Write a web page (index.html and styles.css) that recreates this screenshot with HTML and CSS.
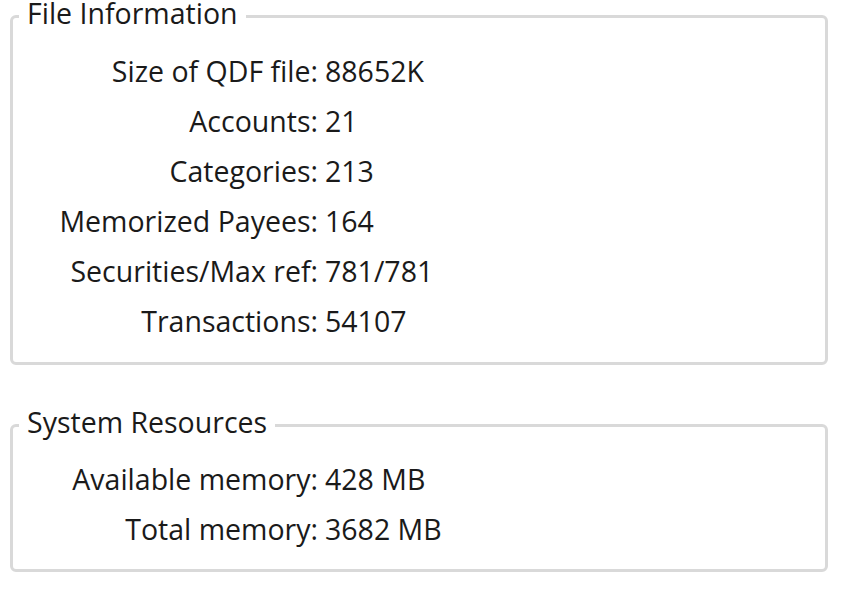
FILE: index.html
```html
<!DOCTYPE html>
<html lang="en">
<head>
<meta charset="utf-8">
<title>File Information</title>
<link rel="stylesheet" href="styles.css">
</head>
<body>
<div class="page">
  <fieldset class="group group-file">
    <legend class="group-title">File Information</legend>
    <div class="rows">
      <div class="label">Size of QDF file:</div><div class="value">88652K</div>
      <div class="label">Accounts:</div><div class="value">21</div>
      <div class="label">Categories:</div><div class="value">213</div>
      <div class="label">Memorized Payees:</div><div class="value">164</div>
      <div class="label">Securities/Max ref:</div><div class="value">781/781</div>
      <div class="label">Transactions:</div><div class="value">54107</div>
    </div>
  </fieldset>
  <fieldset class="group group-system">
    <legend class="group-title">System Resources</legend>
    <div class="rows">
      <div class="label">Available memory:</div><div class="value">428 MB</div>
      <div class="label">Total memory:</div><div class="value">3682 MB</div>
    </div>
  </fieldset>
</div>
</body>
</html>
```

FILE: styles.css
```css
html, body {
  margin: 0;
  padding: 0;
  background: #ffffff;
}

body {
  font-family: "Open Sans", "Noto Sans", sans-serif;
  font-size: 28.5px;
  color: #1a1a1a;
}

.page {
  display: flex;
  flex-direction: column;
  gap: 45px;
  padding: 1px 30px 0 10px;
}

.group {
  margin: 0;
  border: 3px solid #d9d9d9;
  border-radius: 6px;
  min-width: 0;
}

.group-file {
  padding: 15px 0 16px 0;
}

.group-system {
  padding: 14px 0 15px 0;
}

.group-title {
  line-height: 24px;
  padding: 0 8px 6px 8px;
  margin-left: 6px;
}

.rows {
  display: grid;
  grid-template-columns: 305px auto;
  column-gap: 7px;
  grid-auto-rows: 50px;
  align-items: center;
}

.label {
  text-align: right;
  white-space: nowrap;
}

.value {
  white-space: nowrap;
}
```
